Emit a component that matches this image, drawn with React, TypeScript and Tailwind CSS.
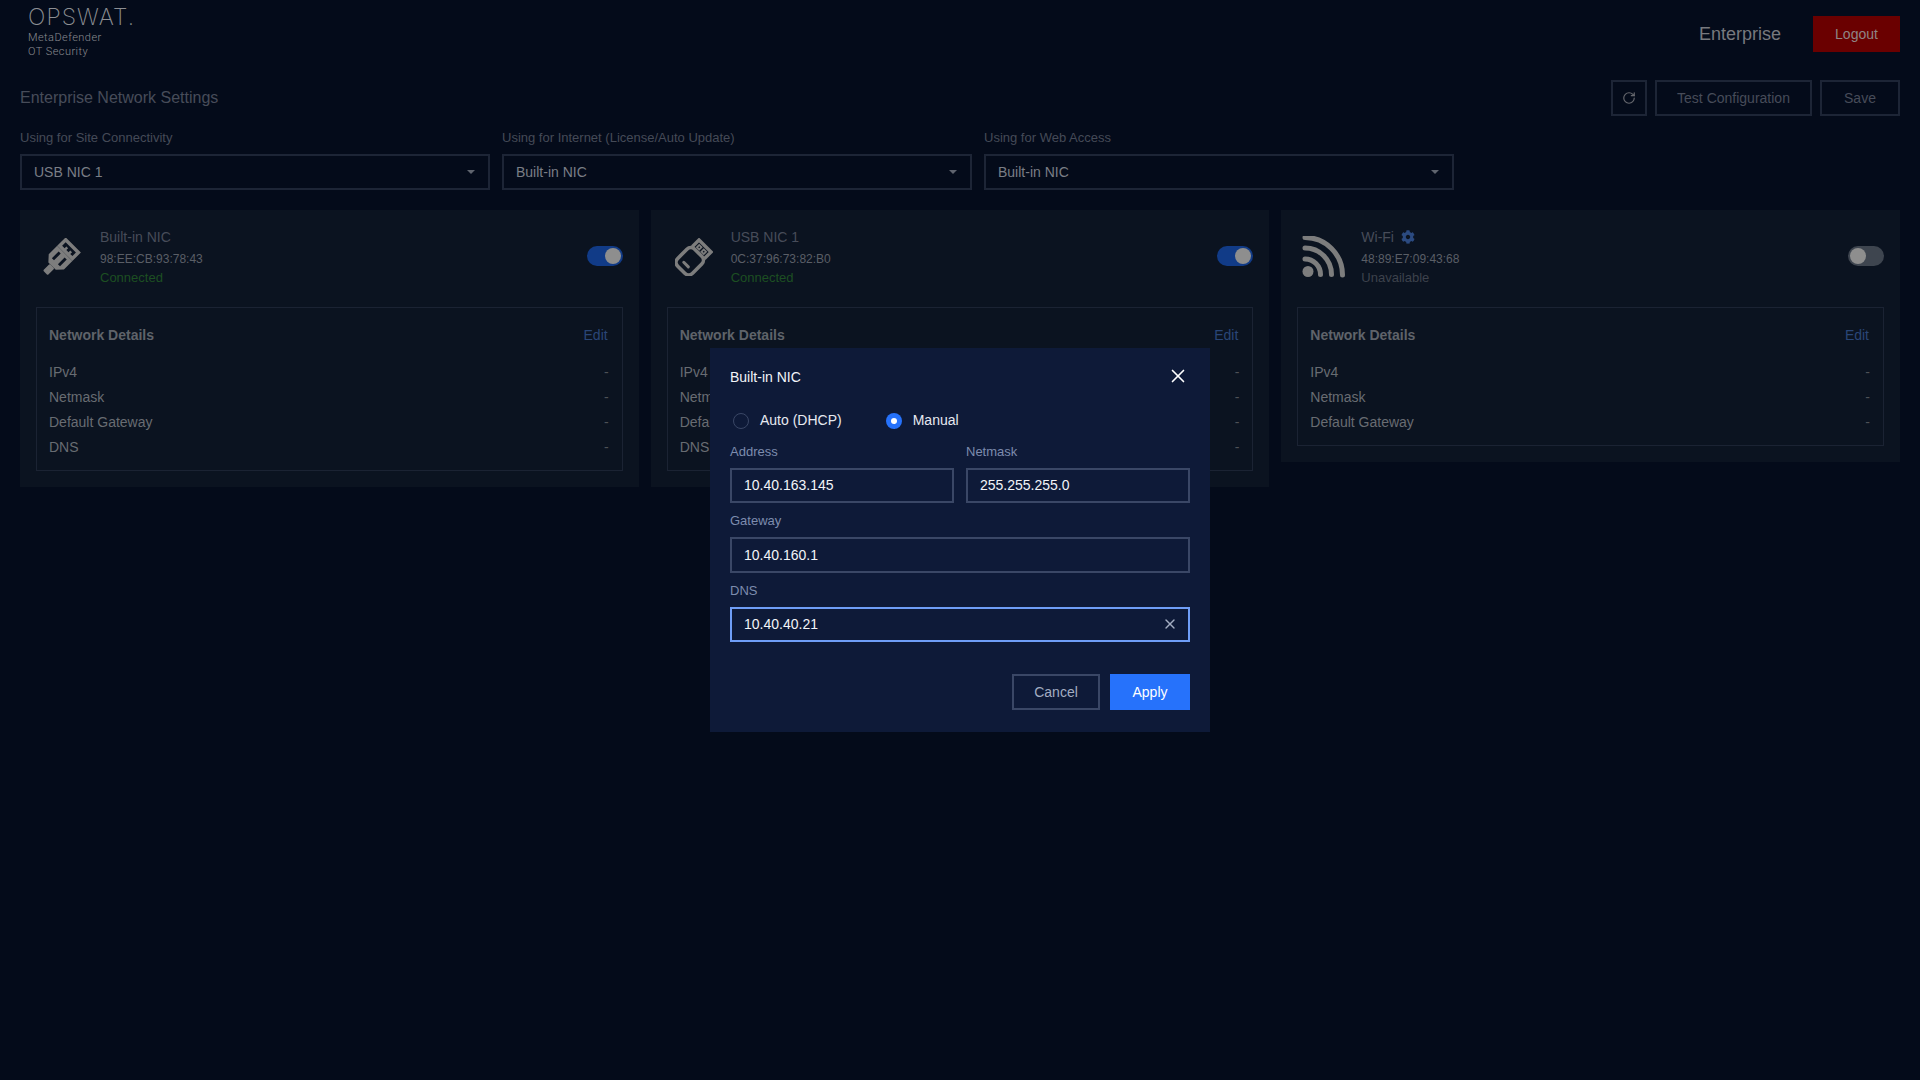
import React from 'react';
import { RotateCw, X } from 'lucide-react';
import { FaCog } from 'react-icons/fa';

function Caret() {
  return <span className="h-0 w-0 border-x-[4px] border-t-[4px] border-x-transparent border-t-[#5f646e]"></span>;
}

function EthernetIcon() {
  return (
    <svg width="39" height="39" viewBox="0 0 39 39" fill="none">
      <g transform="rotate(45 19.5 19.5)" fill="#7d7d7d">
        <path d="M7.5 3H29V15H7.5ZM11 6.5V11.5H14.5V9H17V11.5H20V9H22.5V11.5H25.5V6.5Z" fillRule="evenodd" />
        <path d="M7.5 15H29V27L23.5 33H13L7.5 27ZM12.5 18V27.5H15.5V18ZM21 18V27.5H24V18Z" fillRule="evenodd" />
        <rect x="15" y="33" width="6.5" height="9.5" rx="1" />
      </g>
    </svg>
  );
}

function UsbIcon() {
  return (
    <svg className="ml-0.5" width="38" height="38" viewBox="0 0 38 38" fill="none">
      <g transform="rotate(45 19 19)" stroke="#7d7d7d">
        <rect x="8.5" y="13" width="21" height="24" rx="5.5" strokeWidth="3.6" />
        <path d="M10.5 13V3.4H27.5V13" strokeWidth="3.4" />
        <rect x="14.2" y="6.8" width="3.2" height="3.2" strokeWidth="1.8" />
        <rect x="20.6" y="6.8" width="3.2" height="3.2" strokeWidth="1.8" />
        <path d="M15.5 30H22" strokeWidth="3" strokeLinecap="round" />
      </g>
    </svg>
  );
}

function WifiIcon() {
  return (
    <svg width="43" height="43" viewBox="0 0 43 43" fill="none" stroke="#7d7d7d" strokeWidth="5" strokeLinecap="round">
      <circle cx="6" cy="35.5" r="5.5" fill="#7d7d7d" stroke="none" />
      <path d="M3 23A15.5 15.5 0 0 1 18.5 38.5" />
      <path d="M3 12A26.5 26.5 0 0 1 29.5 38.5" />
      <path d="M3 1.5A37.5 37.5 0 0 1 40.5 39" />
    </svg>
  );
}

function Toggle({ on }: { on: boolean }) {
  return (
    <div className={`mb-0.5 flex h-5 w-9 items-center rounded-full px-0.5 ${on ? 'justify-end bg-[#113b87]' : 'justify-start bg-[#3e454f]'}`}>
      <span className="h-4 w-4 rounded-full bg-[#8e8e8e]"></span>
    </div>
  );
}

function SelectBox({ label, value }: { label: string; value: string }) {
  return (
    <div className="w-[470px]">
      <div className="mb-[7px] text-[13px] leading-[18px] text-[#444a57]">{label}</div>
      <div className="flex h-9 items-center justify-between border-2 border-[#1d2536] pl-3 pr-[13px] text-sm text-[#7a7e86]">
        <span>{value}</span>
        <Caret />
      </div>
    </div>
  );
}

function NicCard({
  icon,
  name,
  gear,
  mac,
  status,
  connected,
  on,
  rows,
}: {
  icon: React.ReactNode;
  name: string;
  gear?: boolean;
  mac: string;
  status: string;
  connected: boolean;
  on: boolean;
  rows: string[];
}) {
  return (
    <div className="bg-[#0b1320] px-4 pb-4 pt-[7px]">
      <div className="flex h-[80px] items-center">
        <div className="mr-3 flex w-[52px] justify-center">{icon}</div>
        <div className="flex-1">
          <div className="flex items-center gap-[7px] text-sm leading-5 text-[#474c59]">
            {name}
            {gear && <FaCog className="h-3.5 w-3.5 text-[#2b4a80]" />}
          </div>
          <div className="mt-1 text-xs leading-4 text-[#5a5e66]">{mac}</div>
          <div className={`mt-0.5 text-[13px] leading-[18px] ${connected ? 'text-[#1d4f22]' : 'text-[#3d424c]'}`}>{status}</div>
        </div>
        <Toggle on={on} />
      </div>
      <div className="mt-[10px] border border-[#1b2333] pb-[10px] pl-3 pr-[13px] pt-[17px]">
        <div className="mb-[15px] flex justify-between pr-px text-sm leading-5">
          <span className="font-bold text-[#5f636a]">Network Details</span>
          <span className="text-[#2a4677]">Edit</span>
        </div>
        {rows.map((row) => (
          <div key={row} className="flex justify-between text-sm leading-[25px] text-[#686c72]">
            <span>{row}</span>
            <span className="text-[#4d5157]">-</span>
          </div>
        ))}
      </div>
    </div>
  );
}

function Field({
  label,
  value,
  className,
  focused,
  tall,
}: {
  label: string;
  value: string;
  className?: string;
  focused?: boolean;
  tall?: boolean;
}) {
  return (
    <div className={className}>
      <div className="mb-2 text-[13px] leading-4 text-[#7d8cae]">{label}</div>
      <div
        className={`flex items-center justify-between border-2 pl-3 pr-[10px] text-sm text-[#f2f4f8] ${tall ? 'h-9' : 'h-[35px] pb-px'} ${
          focused ? 'border-[#6f9ef7]' : 'border-[#3a4766]'
        }`}
      >
        <span>{value}</span>
        {focused && <X className="h-4 w-4 text-[#a3adc2]" strokeWidth={2} />}
      </div>
    </div>
  );
}

const allRows = ['IPv4', 'Netmask', 'Default Gateway', 'DNS'];

export default function App() {
  return (
    <div className="relative min-h-screen bg-[#040b1a] px-5 font-['Liberation_Sans',Arial,sans-serif]">
      {/* Top bar */}
      <div className="flex h-16 items-start justify-between">
        <div className="pl-2 pt-[5px]">
          <div className="font-['Inter',sans-serif] text-[23px] font-extralight leading-[24px] tracking-[1.1px] text-[#8d8f93]">OPSWAT.</div>
          <div className="mt-[2px] font-['Roboto',sans-serif] text-[11px] font-light leading-[14px] tracking-[0.45px] text-[#8a8c91]">
            MetaDefender
            <br />
            OT Security
          </div>
        </div>
        <div className="flex items-center gap-8 pt-4">
          <span className="text-lg text-[#77797e]">Enterprise</span>
          <button className="h-9 w-[87px] bg-[#6a0000] text-sm text-[#8f8585]">Logout</button>
        </div>
      </div>

      {/* Page title and actions */}
      <div className="mt-4 flex h-9 items-center justify-between">
        <h1 className="text-base text-[#474c59]">Enterprise Network Settings</h1>
        <div className="flex gap-2 text-sm text-[#474c59]">
          <button className="flex h-9 w-9 items-center justify-center border-2 border-[#1d2536] text-[#66686e]">
            <RotateCw className="h-3.5 w-3.5" strokeWidth={2} />
          </button>
          <button className="h-9 w-[157px] border-2 border-[#1d2536]">Test Configuration</button>
          <button className="h-9 w-20 border-2 border-[#1d2536]">Save</button>
        </div>
      </div>

      <div className="mt-[13px] flex gap-3">
        <SelectBox label="Using for Site Connectivity" value="USB NIC 1" />
        <SelectBox label="Using for Internet (License/Auto Update)" value="Built-in NIC" />
        <SelectBox label="Using for Web Access" value="Built-in NIC" />
      </div>

      <div className="mt-5 grid grid-cols-3 items-start gap-3">
        <NicCard icon={<EthernetIcon />} name="Built-in NIC" mac="98:EE:CB:93:78:43" status="Connected" connected on rows={allRows} />
        <NicCard icon={<UsbIcon />} name="USB NIC 1" mac="0C:37:96:73:82:B0" status="Connected" connected on rows={allRows} />
        <NicCard
          icon={<WifiIcon />}
          name="Wi-Fi"
          gear
          mac="48:89:E7:09:43:68"
          status="Unavailable"
          connected={false}
          on={false}
          rows={allRows.slice(0, 3)}
        />
      </div>

      {/* Edit dialog */}
      <div className="fixed inset-0 flex items-center justify-center">
        <div className="w-[500px] bg-[#0e1a38] px-5 pb-[22px] pt-[19px]">
          <div className="flex items-center justify-between text-sm leading-5 text-[#f2f4f8]">
            <span>Built-in NIC</span>
            <X className="-my-px mr-px -translate-y-px h-[22px] w-[22px] text-white" strokeWidth={1.8} />
          </div>
          <div className="mt-6 flex items-center pl-[3px] text-sm leading-5 text-[#e6e9f0]">
            <span className="h-4 w-4 rounded-full border border-[#3a4766]"></span>
            <span className="ml-[11px] pb-0.5 leading-[18px]">Auto (DHCP)</span>
            <span className="ml-[44px] flex h-4 w-4 items-center justify-center rounded-full bg-[#2672fb]">
              <span className="h-1.5 w-1.5 rounded-full bg-white"></span>
            </span>
            <span className="ml-[11px] pb-0.5 leading-[18px]">Manual</span>
          </div>
          <div className="mt-[13px] grid grid-cols-2 gap-3">
            <Field label="Address" value="10.40.163.145" />
            <Field label="Netmask" value="255.255.255.0" />
          </div>
          <Field label="Gateway" value="10.40.160.1" className="mt-[10px]" tall />
          <Field label="DNS" value="10.40.40.21" className="mt-[10px]" focused />
          <div className="mt-8 flex justify-end gap-[10px] text-sm">
            <button className="h-9 w-[88px] border-2 border-[#3a4766] text-[#a3adc2]">Cancel</button>
            <button className="h-9 w-20 bg-[#2672fb] text-white">Apply</button>
          </div>
        </div>
      </div>
    </div>
  );
}
